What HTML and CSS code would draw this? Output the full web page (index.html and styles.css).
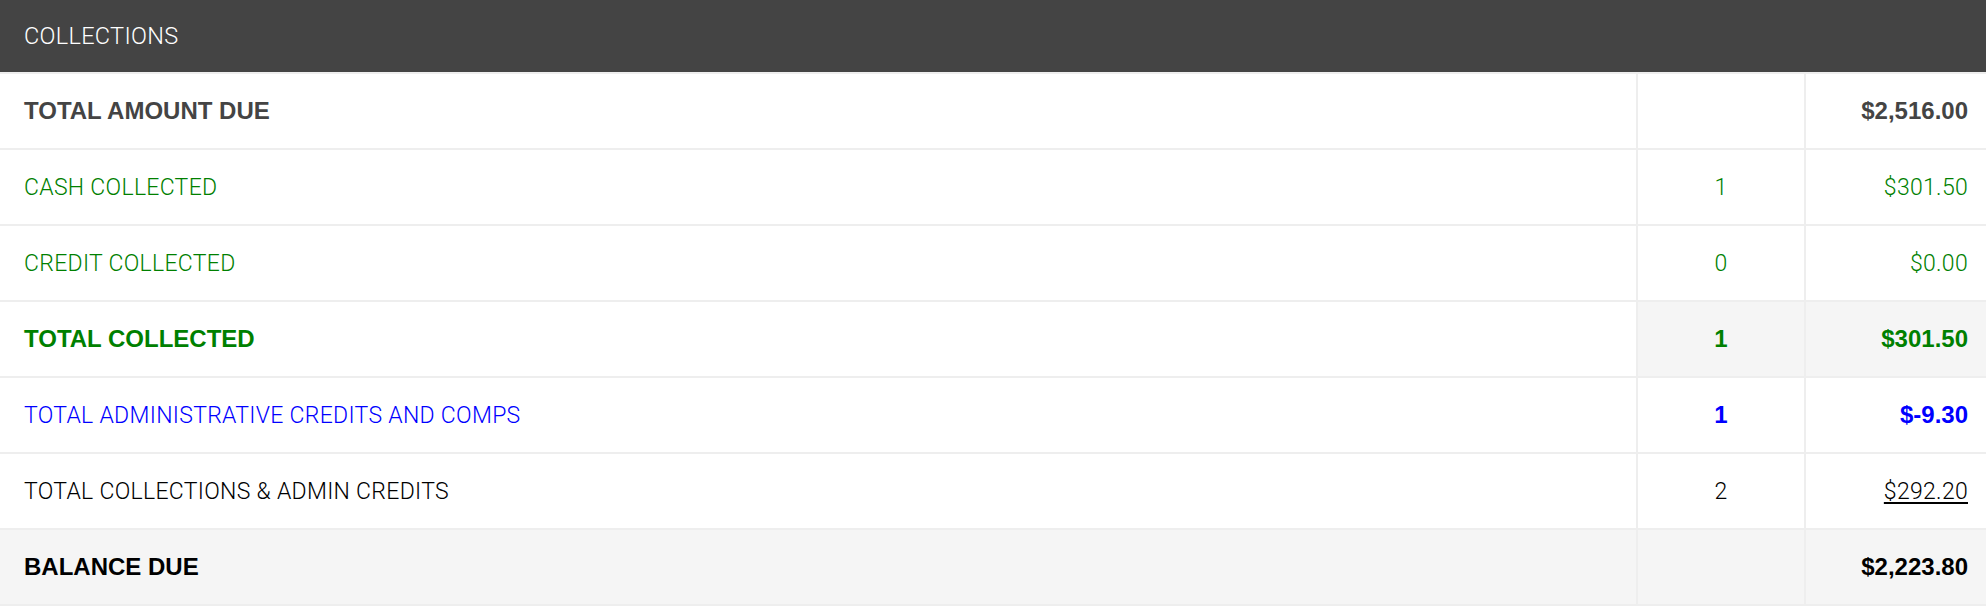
FILE: index.html
```html
<!DOCTYPE html>
<html lang="en">
<head>
<meta charset="utf-8">
<title>Collections</title>
<link rel="stylesheet" href="styles.css">
</head>
<body>
<section class="panel">
  <header class="panel-head">COLLECTIONS</header>
  <div class="table">
    <div class="row row-due">
      <div class="cell label bold">TOTAL AMOUNT DUE</div>
      <div class="cell count"></div>
      <div class="cell amount bold">$2,516.00</div>
    </div>
    <div class="row green">
      <div class="cell label">CASH COLLECTED</div>
      <div class="cell count">1</div>
      <div class="cell amount">$301.50</div>
    </div>
    <div class="row green">
      <div class="cell label">CREDIT COLLECTED</div>
      <div class="cell count">0</div>
      <div class="cell amount">$0.00</div>
    </div>
    <div class="row green row-sub">
      <div class="cell label bold">TOTAL COLLECTED</div>
      <div class="cell count bold shaded">1</div>
      <div class="cell amount bold shaded">$301.50</div>
    </div>
    <div class="row blue">
      <div class="cell label">TOTAL ADMINISTRATIVE CREDITS AND COMPS</div>
      <div class="cell count bold">1</div>
      <div class="cell amount bold">$-9.30</div>
    </div>
    <div class="row black">
      <div class="cell label">TOTAL COLLECTIONS &amp; ADMIN CREDITS</div>
      <div class="cell count">2</div>
      <div class="cell amount"><span class="underline">$292.20</span></div>
    </div>
    <div class="row black row-balance">
      <div class="cell label bold">BALANCE DUE</div>
      <div class="cell count"></div>
      <div class="cell amount bold">$2,223.80</div>
    </div>
  </div>
</section>
</body>
</html>
```

FILE: styles.css
```css
* {
  box-sizing: border-box;
}

html, body {
  margin: 0;
  padding: 0;
  background: #ffffff;
}

body {
  font-family: Roboto, "Liberation Sans", sans-serif;
  font-weight: 300;
}

.panel {
  width: 1986px;
}

.panel-head {
  height: 72px;
  background: #444444;
  color: #ffffff;
  display: flex;
  align-items: center;
  padding-left: 24px;
  font-size: 23.5px;
  letter-spacing: 0.3px;
  font-weight: 300;
}

.table {
  border-top: 2px solid #eeeeee;
}

.row {
  display: grid;
  grid-template-columns: 1fr 168px 180px;
  height: 76px;
  border-bottom: 2px solid #eeeeee;
  font-size: 23px;
  letter-spacing: 0.3px;
}

.cell {
  display: flex;
  align-items: center;
  height: 74px;
}

.label {
  padding-left: 24px;
  border-right: 2px solid #eeeeee;
}

.count {
  justify-content: center;
  border-right: 2px solid #eeeeee;
}

.amount {
  justify-content: flex-end;
  padding-right: 18px;
}

.bold {
  font-family: "Liberation Sans", Arial, sans-serif;
  font-weight: 700;
  font-size: 24px;
  letter-spacing: 0;
}

.row-due {
  color: #444444;
}

.green {
  color: #008000;
}

.blue {
  color: #0000ff;
}

.black {
  color: #000000;
}

.shaded {
  background: #f5f5f5;
}

.row-balance {
  background: #f5f5f5;
}

.underline {
  text-decoration: underline;
  text-decoration-thickness: 2px;
  text-underline-offset: 3px;
}
```
